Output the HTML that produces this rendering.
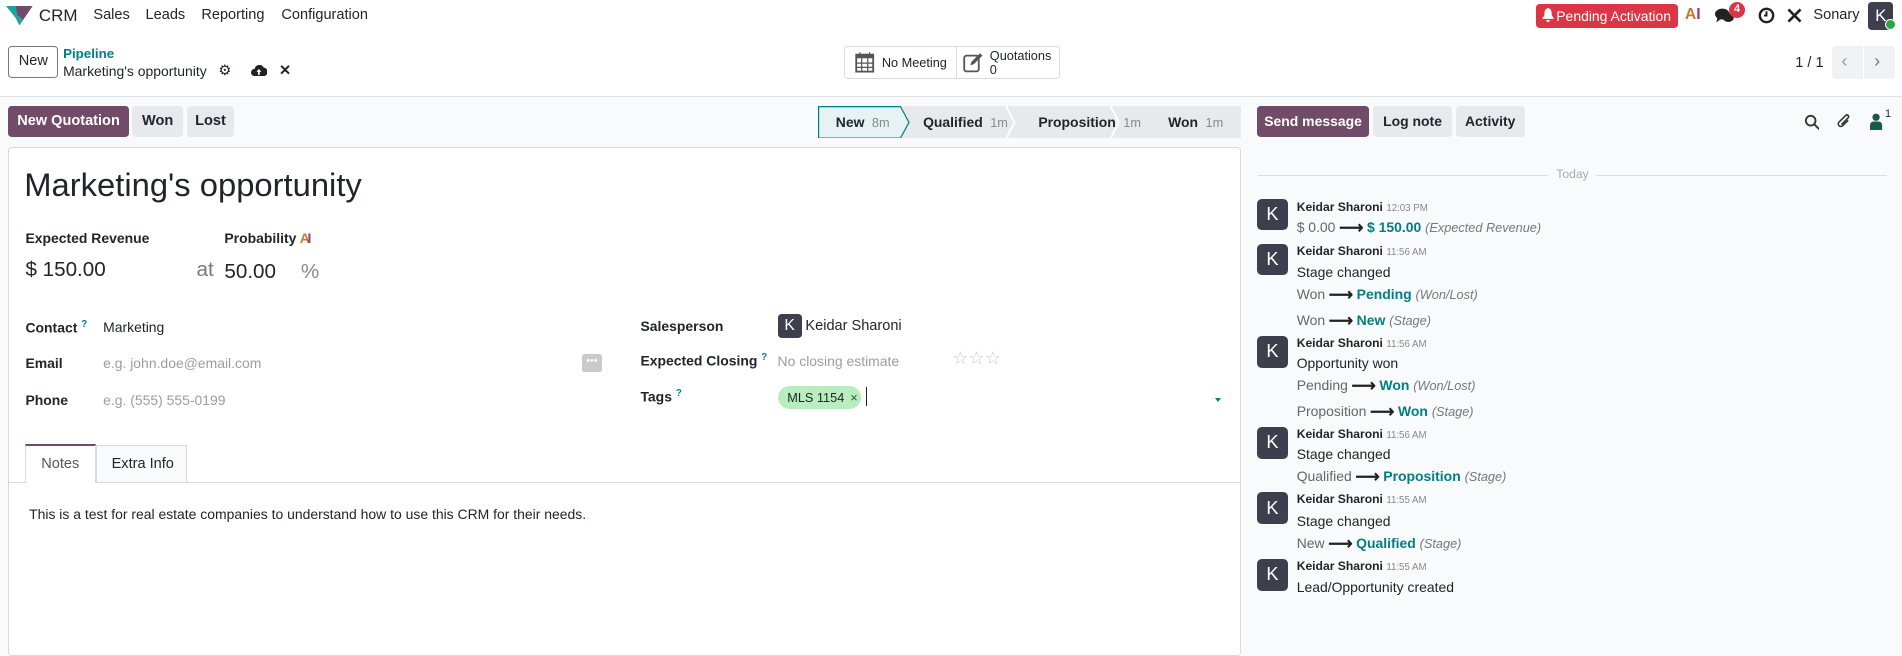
<!DOCTYPE html>
<html><head><meta charset="utf-8">
<style>
html{zoom:1.2130}
*{box-sizing:border-box;margin:0;padding:0}
body{width:1568px;height:525px;overflow:hidden;font-family:"Liberation Sans",sans-serif;color:#212529;background:#f9fafb;position:relative;font-size:12px}
.a{position:absolute;white-space:nowrap}
.btn{position:absolute;border-radius:3px;display:flex;align-items:center;justify-content:center;font-size:12px;font-weight:bold}
.g{background:#e7e9ed;color:#212529}
.p{background:#714b67;color:#fff}
.lbl{font-weight:bold;font-size:11.5px}
.ph{color:#9a9da3;font-size:11.5px}
.av{position:absolute;width:26px;height:26px;border-radius:4px;background:#3d3f4d;color:#fff;font-size:15px;display:flex;align-items:center;justify-content:center}
.nm{font-weight:bold;font-size:10px}
.tm{color:#888;font-size:8px;font-weight:normal}
.t{color:#017e84;font-weight:bold}
.i{font-style:italic;color:#777}
.o{color:#666}
.ms{font-size:11.5px}
.ar{font-size:14px;font-weight:bold;color:#222;margin:0 3px;vertical-align:-1px}
</style></head><body>
<!-- navbar -->
<div class="a" style="left:0;top:0;width:1568px;height:26px;background:#fff"></div>
<svg class="a" style="left:5px;top:5px" width="22" height="16" viewBox="0 0 22 16"><path d="M0 0h8l3 5-3 5z" fill="#1ba39c"/><path d="M8 0h14l-11 16z" fill="#714b67"/><path d="M5 4l6 12 3-5z" fill="#28a3a0"/></svg>
<div class="a" style="left:32px;top:5px;font-size:14px">CRM</div>
<div class="a" style="left:77px;top:6px;font-size:12px">Sales</div>
<div class="a" style="left:120px;top:6px;font-size:12px">Leads</div>
<div class="a" style="left:166px;top:6px;font-size:12px">Reporting</div>
<div class="a" style="left:232px;top:6px;font-size:12px">Configuration</div>
<div class="a" style="left:1266px;top:3px;width:117px;height:20px;background:#dc3545;border-radius:3px;color:#fff;font-size:11.5px;line-height:20px;padding-left:17px">Pending Activation</div>
<svg class="a" style="left:1271px;top:7px" width="10" height="12" viewBox="0 0 10 12"><path d="M5 0C2 1 2 3 2 6L0 9h10L8 6C8 3 8 1 5 0zM3.5 10h3a1.5 1.5 0 01-3 0z" fill="#fff"/></svg>
<div class="a" style="left:1389px;top:5px;font-size:13px;font-weight:bold;color:#c9792a">A<span style="color:#8e3c8e">I</span></div>
<svg class="a" style="left:1414px;top:7px" width="16" height="13" viewBox="0 0 16 13"><ellipse cx="6" cy="5" rx="6" ry="4.5" fill="#222"/><path d="M2 8l-1 4 4-3z" fill="#222"/><ellipse cx="11" cy="8" rx="4.5" ry="3.5" fill="#222"/></svg>
<div class="a" style="left:1425px;top:2px;width:14px;height:13px;border-radius:7px;background:#dc3545;color:#fff;font-size:9px;font-weight:bold;text-align:center;line-height:13px">4</div>
<svg class="a" style="left:1449px;top:6px" width="14" height="14" viewBox="0 0 14 14"><circle cx="7" cy="7" r="5.5" fill="none" stroke="#222" stroke-width="2"/><path d="M7 3.5V7H5" fill="none" stroke="#222" stroke-width="1.6"/></svg>
<svg class="a" style="left:1472px;top:6px" width="14" height="14" viewBox="0 0 14 14"><path d="M2 2l10 10M12 2L2 12" stroke="#222" stroke-width="2.2"/></svg>
<div class="a" style="left:1495px;top:6px;font-size:12px">Sonary</div>
<div class="a" style="left:1540px;top:2px;width:21px;height:23px;background:#3d3f4d;border-radius:3px;color:#fff;font-size:14px;text-align:center;line-height:23px">K</div>
<div class="a" style="left:1554px;top:16px;width:9px;height:9px;border-radius:5px;background:#28a745;border:1px solid #fff"></div>
<!-- control panel -->
<div class="a" style="left:0;top:26px;width:1568px;height:54px;background:#fff;border-bottom:1px solid #dee2e6"></div>
<div class="a" style="left:7px;top:38px;width:41px;height:26px;border:1px solid #777;border-radius:3px;background:#fff;font-size:12px;text-align:center;line-height:24px">New</div>
<div class="a" style="left:52px;top:38px;color:#017e84;font-size:11px;font-weight:bold">Pipeline</div>
<div class="a" style="left:52px;top:52px;font-size:11.5px">Marketing's opportunity</div>
<div class="a" style="left:180px;top:51px;font-size:12px">⚙</div>
<svg class="a" style="left:207px;top:53px" width="13" height="10" viewBox="0 0 13 10"><path d="M3 10a3 3 0 010-6 4 4 0 017.5-1A3 3 0 0110 10z" fill="#222"/><path d="M6.5 4l-2 2.5h1.3V9h1.4V6.5h1.3z" fill="#fff"/></svg>
<div class="a" style="left:230px;top:51px;font-size:12px;font-weight:bold">✕</div>
<div class="a" style="left:696px;top:38px;width:178px;height:27px;border:1px solid #d8dadd;border-radius:3px;background:#fff"></div>
<div class="a" style="left:788px;top:38px;width:1px;height:27px;background:#d8dadd"></div>
<svg class="a" style="left:705px;top:42px" width="16" height="18" viewBox="0 0 16 18"><rect x="1" y="3" width="14" height="14" fill="none" stroke="#555" stroke-width="1.5"/><rect x="1" y="3" width="14" height="3" fill="#555"/><path d="M4 1v4M12 1v4M1 10h14M1 13.5h14M5.5 6v11M10.5 6v11" stroke="#555"/></svg>
<div class="a" style="left:727px;top:45px;font-size:10.5px">No Meeting</div>
<svg class="a" style="left:794px;top:43px" width="17" height="17" viewBox="0 0 17 17"><rect x="1" y="3" width="12" height="13" rx="2" fill="none" stroke="#555" stroke-width="1.5"/><path d="M6 11l1-3 7-7 2 2-7 7z" fill="#555"/></svg>
<div class="a" style="left:816px;top:40px;font-size:10.5px;line-height:12px">Quotations<br>0</div>
<div class="a" style="left:1480px;top:45px;font-size:12px">1 / 1</div>
<div class="a" style="left:1510px;top:38px;width:52px;height:27px;background:#f0f1f3;border-radius:3px"></div>
<div class="a" style="left:1536px;top:38px;width:1px;height:27px;background:#fff"></div>
<div class="a" style="left:1518px;top:42px;font-size:15px;color:#999">‹</div>
<div class="a" style="left:1545px;top:42px;font-size:15px;color:#777">›</div>
<!-- action row -->
<div class="btn p" style="left:7px;top:87px;width:99px;height:26px">New Quotation</div>
<div class="btn g" style="left:109px;top:87px;width:42px;height:26px">Won</div>
<div class="btn g" style="left:154px;top:87px;width:39px;height:26px">Lost</div>
<svg class="a" style="left:674px;top:87px" width="349" height="27" viewBox="0 0 349 27">
<rect x="0" y="0" width="349" height="27" fill="#e7e9ed"/>
<path d="M0.5 0.5H68l7 13-7 13H0.5z" fill="#e6f2f3" stroke="#017e84"/>
<path d="M155 0l7 13.5-7 13.5M241 0l7 13.5-7 13.5" fill="none" stroke="#fff" stroke-width="1.5"/>
</svg>
<div class="a" style="left:689px;top:94px;font-size:11.5px;font-weight:bold">New <span style="font-weight:normal;color:#888;font-size:10.5px;margin-left:3px">8m</span></div>
<div class="a" style="left:761px;top:94px;font-size:11.5px;font-weight:bold">Qualified <span style="font-weight:normal;color:#888;font-size:10.5px;margin-left:3px">1m</span></div>
<div class="a" style="left:856px;top:94px;font-size:11.5px;font-weight:bold">Proposition <span style="font-weight:normal;color:#888;font-size:10.5px;margin-left:3px">1m</span></div>
<div class="a" style="left:963px;top:94px;font-size:11.5px;font-weight:bold">Won <span style="font-weight:normal;color:#888;font-size:10.5px;margin-left:3px">1m</span></div>
<div class="btn p" style="left:1036px;top:87px;width:93px;height:26px;font-size:11.5px">Send message</div>
<div class="btn g" style="left:1132px;top:87px;width:65px;height:26px;font-size:11.5px">Log note</div>
<div class="btn g" style="left:1200px;top:87px;width:57px;height:26px;font-size:11.5px">Activity</div>
<svg class="a" style="left:1487px;top:94px" width="13" height="13" viewBox="0 0 13 13"><circle cx="5.5" cy="5.5" r="4" fill="none" stroke="#333" stroke-width="1.5"/><path d="M8.5 8.5l4 4" stroke="#333" stroke-width="1.6"/></svg>
<svg class="a" style="left:1514px;top:93px" width="13" height="14" viewBox="0 0 13 14"><path d="M10 6L5.5 10.5a2 2 0 01-3-3L8 2a1.3 1.3 0 012 2L4.5 9.5" fill="none" stroke="#333" stroke-width="1.3"/></svg>
<svg class="a" style="left:1542px;top:93px" width="10" height="14" viewBox="0 0 10 14"><circle cx="5" cy="3.5" r="3" fill="#1a5a4e"/><path d="M0 14v-4a3 3 0 013-3h4a3 3 0 013 3v4z" fill="#1a5a4e"/></svg>
<div class="a" style="left:1554px;top:89px;font-size:9px">1</div>
<!-- sheet -->
<div class="a" style="left:7px;top:121px;width:1016px;height:420px;background:#fff;border:1px solid #d8dadd;border-radius:3px"></div>
<div class="a" style="left:20px;top:137px;font-size:27px">Marketing's opportunity</div>
<div class="a lbl" style="left:21px;top:190px">Expected Revenue</div>
<div class="a lbl" style="left:185px;top:190px">Probability <span style="color:#c9792a">A</span><span style="color:#8e3c8e;margin-left:-2px">I</span></div>
<div class="a" style="left:21px;top:213px;font-size:17px">$ 150.00</div>
<div class="a" style="left:162px;top:213px;font-size:17px;color:#777">at</div>
<div class="a" style="left:185px;top:214px;font-size:17px">50.00</div>
<div class="a" style="left:248px;top:214px;font-size:17px;color:#888">%</div>
<div class="a lbl" style="left:21px;top:263px">Contact <sup style="color:#017e84;font-size:8px">?</sup></div>
<div class="a" style="left:85px;top:263px;font-size:11.5px">Marketing</div>
<div class="a lbl" style="left:21px;top:293px">Email</div>
<div class="a ph" style="left:85px;top:293px">e.g. john.doe@email.com</div>
<div class="a" style="left:480px;top:292px;width:16px;height:15px;background:#c8cace;border-radius:2px;color:#fff;font-size:9px;text-align:center;line-height:13px">•••</div>
<div class="a lbl" style="left:21px;top:323px">Phone</div>
<div class="a ph" style="left:85px;top:323px">e.g. (555) 555-0199</div>
<div class="a lbl" style="left:528px;top:262px">Salesperson</div>
<div class="a" style="left:641px;top:259px;width:20px;height:20px;background:#3d3f4d;border-radius:3px;color:#fff;text-align:center;line-height:20px;font-size:13px">K</div>
<div class="a" style="left:664px;top:262px;font-size:12px">Keidar Sharoni</div>
<div class="a lbl" style="left:528px;top:290px">Expected Closing <sup style="color:#017e84;font-size:8px">?</sup></div>
<div class="a ph" style="left:641px;top:291px">No closing estimate</div>
<div class="a" style="left:785px;top:287px;font-size:15px;color:#c8cace;letter-spacing:0px">☆☆☆</div>
<div class="a lbl" style="left:528px;top:320px">Tags <sup style="color:#017e84;font-size:8px">?</sup></div>
<div class="a" style="left:641px;top:318px;width:69px;height:19px;background:#b8eebd;border-radius:10px;font-size:10.5px;line-height:19px;padding-left:8px">MLS 1154 <span style="color:#444;margin-left:2px">×</span></div>
<div class="a" style="left:714px;top:319px;width:1px;height:16px;background:#222"></div>
<div class="a" style="left:1002px;top:328px;width:0;height:0;border-left:3px solid transparent;border-right:3px solid transparent;border-top:4px solid #017e84"></div>
<div class="a" style="left:7px;top:397px;width:1016px;height:1px;background:#d8dadd"></div>
<div class="a" style="left:21px;top:366px;width:58px;height:32px;background:#fff;border:1px solid #d8dadd;border-bottom:none;border-top:2px solid #714b67"></div>
<div class="a" style="left:34px;top:376px;color:#555">Notes</div>
<div class="a" style="left:79px;top:367px;width:75px;height:30px;background:#f9fafb;border:1px solid #d8dadd;border-bottom:none"></div>
<div class="a" style="left:92px;top:376px">Extra Info</div>
<div class="a" style="left:24px;top:417px;font-size:11.5px">This is a test for real estate companies to understand how to use this CRM for their needs.</div>
<!-- chatter -->
<div class="a" style="left:1037px;top:144px;width:239px;height:1px;background:#dcdde0"></div>
<div class="a" style="left:1316px;top:144px;width:240px;height:1px;background:#dcdde0"></div>
<div class="a" style="left:1283px;top:138px;font-size:10px;color:#aaa">Today</div>

<div class="av" style="left:1036px;top:164px">K</div>
<div class="a nm" style="left:1069px;top:165px">Keidar Sharoni <span class="tm">12:03 PM</span></div>
<div class="a ms" style="left:1069px;top:180px"><span class="o">$ 0.00</span><span class="ar">⟶</span><span class="t">$ 150.00</span> <span class="i" style="font-size:10.5px">(Expected Revenue)</span></div>

<div class="av" style="left:1036px;top:201px">K</div>
<div class="a nm" style="left:1069px;top:201px">Keidar Sharoni <span class="tm">11:56 AM</span></div>
<div class="a ms" style="left:1069px;top:218px">Stage changed</div>
<div class="a ms" style="left:1069px;top:235px"><span class="o">Won</span><span class="ar">⟶</span><span class="t">Pending</span> <span class="i" style="font-size:10.5px">(Won/Lost)</span></div>
<div class="a ms" style="left:1069px;top:256px"><span class="o">Won</span><span class="ar">⟶</span><span class="t">New</span> <span class="i" style="font-size:10.5px">(Stage)</span></div>

<div class="av" style="left:1036px;top:277px">K</div>
<div class="a nm" style="left:1069px;top:277px">Keidar Sharoni <span class="tm">11:56 AM</span></div>
<div class="a ms" style="left:1069px;top:293px">Opportunity won</div>
<div class="a ms" style="left:1069px;top:310px"><span class="o">Pending</span><span class="ar">⟶</span><span class="t">Won</span> <span class="i" style="font-size:10.5px">(Won/Lost)</span></div>
<div class="a ms" style="left:1069px;top:331px"><span class="o">Proposition</span><span class="ar">⟶</span><span class="t">Won</span> <span class="i" style="font-size:10.5px">(Stage)</span></div>

<div class="av" style="left:1036px;top:352px">K</div>
<div class="a nm" style="left:1069px;top:352px">Keidar Sharoni <span class="tm">11:56 AM</span></div>
<div class="a ms" style="left:1069px;top:368px">Stage changed</div>
<div class="a ms" style="left:1069px;top:385px"><span class="o">Qualified</span><span class="ar">⟶</span><span class="t">Proposition</span> <span class="i" style="font-size:10.5px">(Stage)</span></div>

<div class="av" style="left:1036px;top:406px">K</div>
<div class="a nm" style="left:1069px;top:406px">Keidar Sharoni <span class="tm">11:55 AM</span></div>
<div class="a ms" style="left:1069px;top:423px">Stage changed</div>
<div class="a ms" style="left:1069px;top:440px"><span class="o">New</span><span class="ar">⟶</span><span class="t">Qualified</span> <span class="i" style="font-size:10.5px">(Stage)</span></div>

<div class="av" style="left:1036px;top:461px">K</div>
<div class="a nm" style="left:1069px;top:461px">Keidar Sharoni <span class="tm">11:55 AM</span></div>
<div class="a ms" style="left:1069px;top:477px">Lead/Opportunity created</div>
</body></html>
